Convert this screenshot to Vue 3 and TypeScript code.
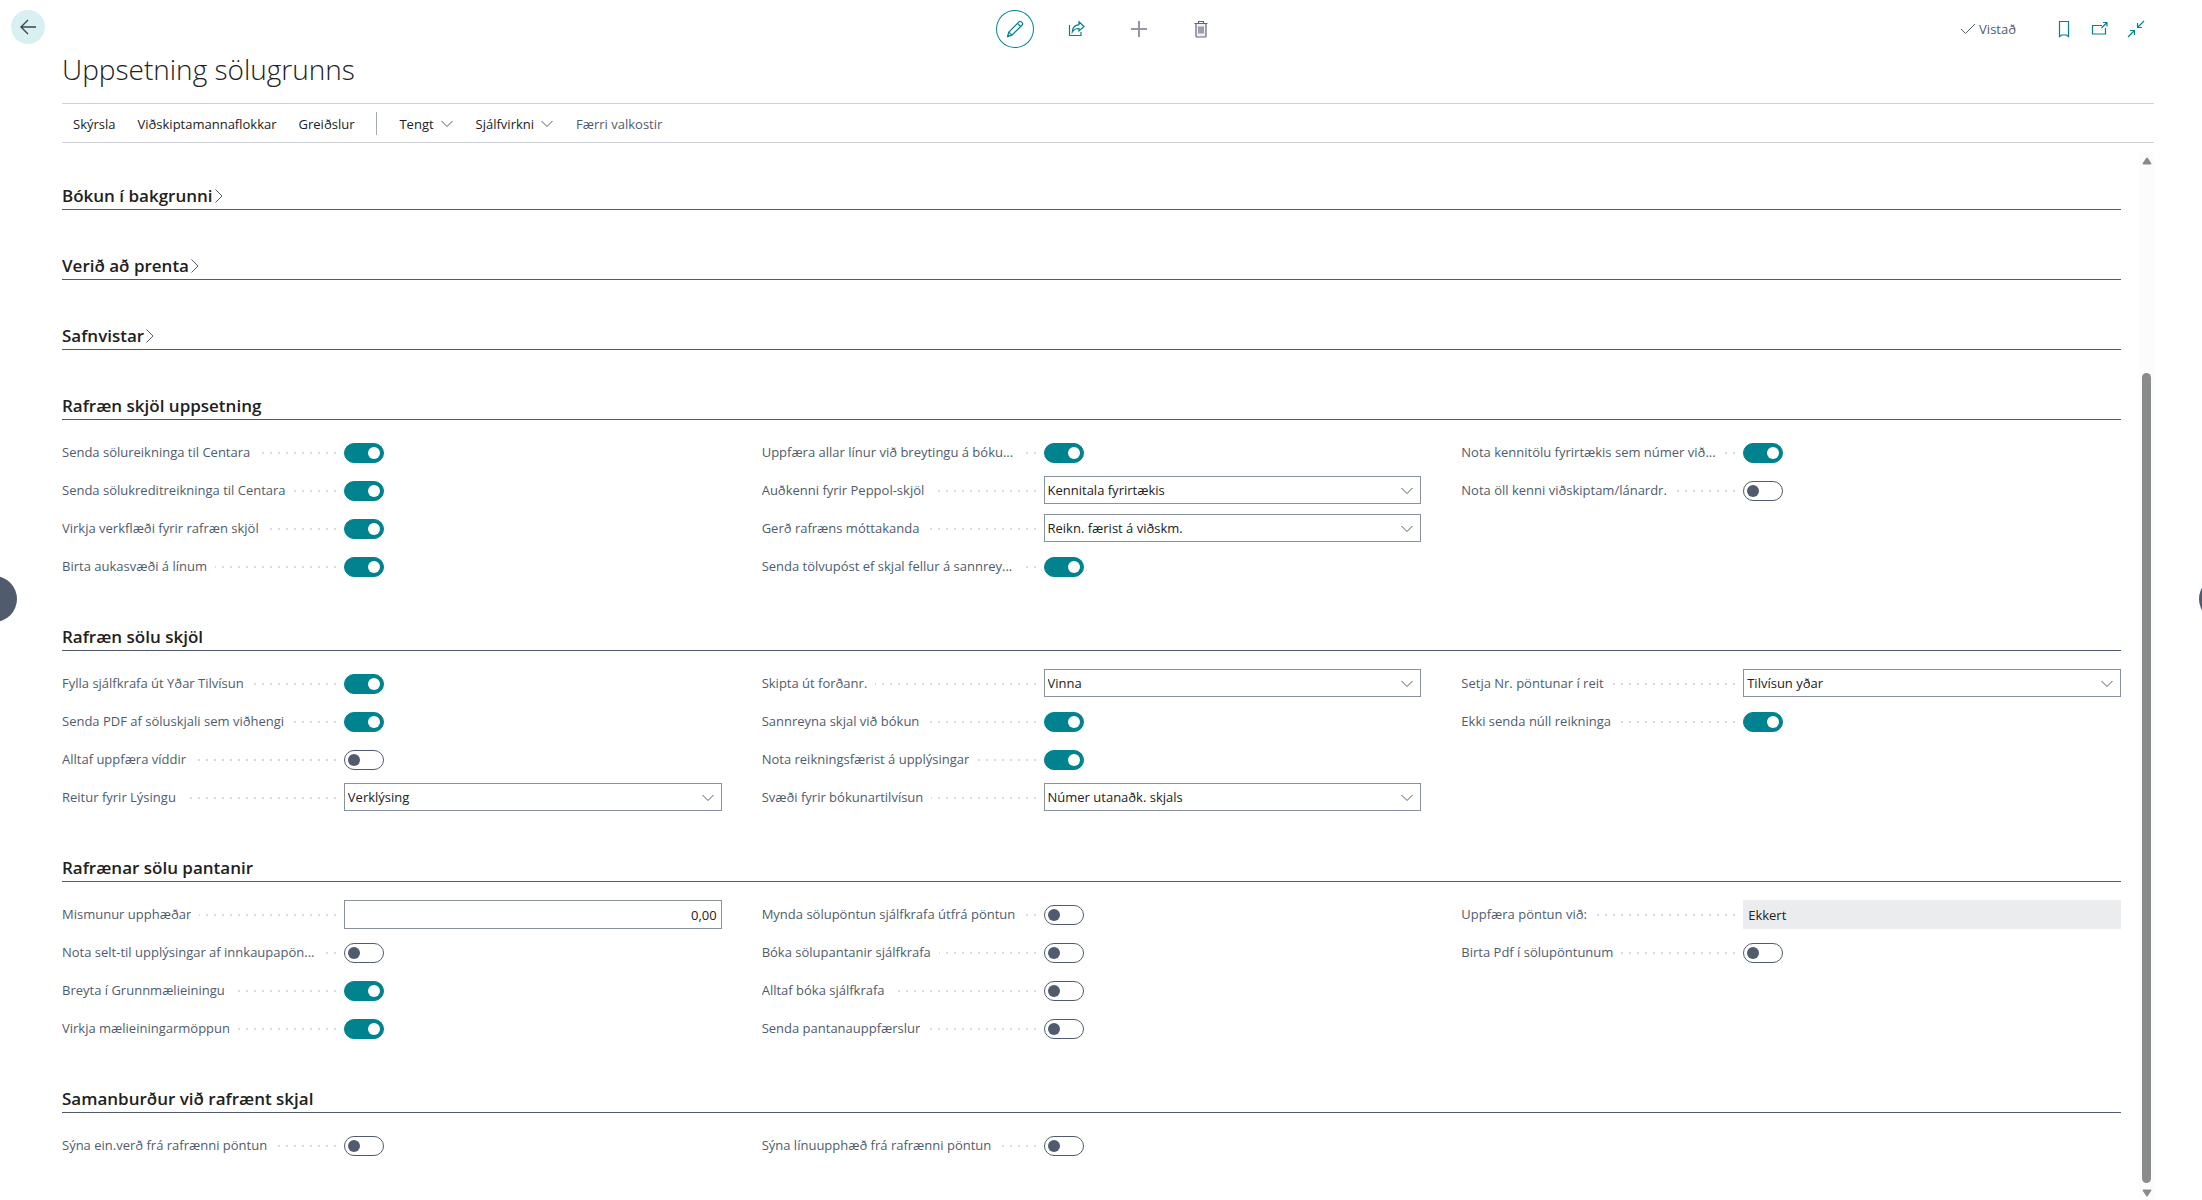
<script setup lang="ts">
import { reactive, ref } from 'vue'

type Kind = 'toggle' | 'select' | 'amount' | 'readonly'

interface Field {
  id: string
  label: string
  kind: Kind
  on: boolean
  value: string
}

interface Group {
  title: string
  columns: Field[][]
}

let nextId = 0

function makeField(label: string, kind: Kind, on: boolean, value: string): Field {
  nextId += 1
  return { id: `field-${nextId}`, label, kind, on, value }
}

const on = (label: string) => makeField(label, 'toggle', true, '')
const off = (label: string) => makeField(label, 'toggle', false, '')
const pick = (label: string, value: string) => makeField(label, 'select', false, value)

const collapsedGroups = ['Bókun í bakgrunni', 'Verið að prenta', 'Safnvistar']

const groups = reactive<Group[]>([
  {
    title: 'Rafræn skjöl uppsetning',
    columns: [
      [
        on('Senda sölureikninga til Centara'),
        on('Senda sölukreditreikninga til Centara'),
        on('Virkja verkflæði fyrir rafræn skjöl'),
        on('Birta aukasvæði á línum'),
      ],
      [
        on('Uppfæra allar línur við breytingu á bóku...'),
        pick('Auðkenni fyrir Peppol-skjöl', 'Kennitala fyrirtækis'),
        pick('Gerð rafræns móttakanda', 'Reikn. færist á viðskm.'),
        on('Senda tölvupóst ef skjal fellur á sannrey...'),
      ],
      [
        on('Nota kennitölu fyrirtækis sem númer við...'),
        off('Nota öll kenni viðskiptam/lánardr.'),
      ],
    ],
  },
  {
    title: 'Rafræn sölu skjöl',
    columns: [
      [
        on('Fylla sjálfkrafa út Yðar Tilvísun'),
        on('Senda PDF af söluskjali sem viðhengi'),
        off('Alltaf uppfæra víddir'),
        pick('Reitur fyrir Lýsingu', 'Verklýsing'),
      ],
      [
        pick('Skipta út forðanr.', 'Vinna'),
        on('Sannreyna skjal við bókun'),
        on('Nota reikningsfærist á upplýsingar'),
        pick('Svæði fyrir bókunartilvísun', 'Númer utanaðk. skjals'),
      ],
      [
        pick('Setja Nr. pöntunar í reit', 'Tilvísun yðar'),
        on('Ekki senda núll reikninga'),
      ],
    ],
  },
  {
    title: 'Rafrænar sölu pantanir',
    columns: [
      [
        makeField('Mismunur upphæðar', 'amount', false, '0,00'),
        off('Nota selt-til upplýsingar af innkaupapön...'),
        on('Breyta í Grunnmælieiningu'),
        on('Virkja mælieiningarmöppun'),
      ],
      [
        off('Mynda sölupöntun sjálfkrafa útfrá pöntun'),
        off('Bóka sölupantanir sjálfkrafa'),
        off('Alltaf bóka sjálfkrafa'),
        off('Senda pantanauppfærslur'),
      ],
      [
        makeField('Uppfæra pöntun við:', 'readonly', false, 'Ekkert'),
        off('Birta Pdf í sölupöntunum'),
      ],
    ],
  },
  {
    title: 'Samanburður við rafrænt skjal',
    columns: [
      [off('Sýna ein.verð frá rafrænni pöntun')],
      [off('Sýna línuupphæð frá rafrænni pöntun')],
      [],
    ],
  },
])

const editing = ref(true)
</script>

<template>
  <div class="page">
    <div class="rail">
      <button class="back" type="button" aria-label="Til baka">
        <svg width="18" height="18" viewBox="0 0 18 18"><path d="M17 9H2M9 2L2 9l7 7" /></svg>
      </button>
    </div>

    <div class="main">
      <header class="topbar">
        <div class="commands">
          <button class="icon-button" :class="{ active: editing }" type="button" aria-label="Breyta" @click="editing = !editing">
            <svg width="18" height="18" viewBox="0 0 18 18">
              <path d="M1.5 16.5l1.3-4.4L13 1.9a1.7 1.7 0 0 1 2.4 0l.7.7a1.7 1.7 0 0 1 0 2.4L5.9 15.200z" />
              <path d="M2.800 12.100l3.100 3.100M11.500 3.400l3.100 3.100M2 14.600l1.400 1.400" />
            </svg>
          </button>
          <button class="icon-button" type="button" aria-label="Deila">
            <svg width="18" height="18" viewBox="0 0 18 18">
              <path d="M1.500 5v10.500h11.500V12" />
              <path d="M11 1.800L16 6.500l-5 4.500V8.500C8 8.300 6 9.300 4.300 12 4.500 8 7 5 11 4.600z" />
            </svg>
          </button>
          <button class="icon-button muted" type="button" aria-label="Nýtt">
            <svg width="18" height="18" viewBox="0 0 18 18"><path class="thick" d="M9 1v16M1 9h16" /></svg>
          </button>
          <button class="icon-button slate" type="button" aria-label="Eyða">
            <svg width="18" height="18" viewBox="0 0 18 18">
              <path class="tint" d="M4 3.500h10v12.500a1 1 0 0 1-1 1H5a1 1 0 0 1-1-1z" />
              <path d="M2.500 3.500h13M6.500 3.500V1.500h5v2M7 6.500v7M9 6.500v7M11 6.500v7" />
            </svg>
          </button>
        </div>
        <div class="status">
          <span class="saved">
            <svg width="16" height="12" viewBox="0 0 16 12"><path d="M1 6l4.500 4.500L15 1" /></svg>
            <span>Vistað</span>
          </span>
          <button class="small-button" type="button" aria-label="Bókamerki">
            <svg width="18" height="18" viewBox="0 0 18 18"><path d="M4.500 1.500h9v15L11.500 15h-5l-2 1.500z" /></svg>
          </button>
          <button class="small-button" type="button" aria-label="Opna í nýjum glugga">
            <svg width="18" height="18" viewBox="0 0 18 18">
              <path d="M11 5.500H1.500v8.500h13V8" />
              <path d="M10.500 8L16 2.500M12 2.500h4v4" />
            </svg>
          </button>
          <button class="small-button" type="button" aria-label="Minnka">
            <svg width="18" height="18" viewBox="0 0 18 18">
              <path d="M17 1l-6.500 6.500M10.500 3v4.500H15M1 17l6.500-6.500M3 10.500h4.500V15" />
            </svg>
          </button>
        </div>
      </header>

      <h1>Uppsetning sölugrunns</h1>

      <nav class="toolbar">
        <button type="button">Skýrsla</button>
        <button type="button">Viðskiptamannaflokkar</button>
        <button type="button">Greiðslur</button>
        <span class="separator"></span>
        <button type="button">
          Tengt
          <svg width="12" height="8" viewBox="0 0 12 8"><path d="M.5 1L6 6.500 11.500 1" /></svg>
        </button>
        <button type="button">
          Sjálfvirkni
          <svg width="12" height="8" viewBox="0 0 12 8"><path d="M.5 1L6 6.500 11.500 1" /></svg>
        </button>
        <button class="fewer" type="button">Færri valkostir</button>
      </nav>

      <div class="scroll-area">
        <main class="content">
          <h2 v-for="title in collapsedGroups" :key="title">
            <button class="expander" type="button" aria-expanded="false">
              {{ title }}
              <svg width="8" height="14" viewBox="0 0 8 14"><path d="M.5 .5L7 7 .5 13.500" /></svg>
            </button>
          </h2>

          <section v-for="group in groups" :key="group.title">
            <h2>{{ group.title }}</h2>
            <div class="columns">
              <div v-for="(column, index) in group.columns" :key="index" class="column">
                <div v-for="field in column" :key="field.id" class="field">
                  <div class="caption">
                    <label :for="field.id">{{ field.label }}</label>
                    <span class="dots"></span>
                  </div>
                  <input v-if="field.kind === 'toggle'" :id="field.id" v-model="field.on" class="toggle" type="checkbox" role="switch" />
                  <div v-else-if="field.kind === 'select'" class="select">
                    <select :id="field.id" v-model="field.value">
                      <option>{{ field.value }}</option>
                    </select>
                    <svg width="12" height="8" viewBox="0 0 12 8"><path d="M.5 1L6 6.500 11.500 1" /></svg>
                  </div>
                  <input v-else-if="field.kind === 'amount'" :id="field.id" v-model="field.value" class="text amount" type="text" />
                  <input v-else :id="field.id" :value="field.value" class="text readonly" type="text" readonly />
                </div>
              </div>
            </div>
          </section>
        </main>

        <div class="scrollbar">
          <svg width="10" height="8" viewBox="0 0 10 8"><path d="M4 1.200a1.200 1.200 0 0 1 2 0L9.300 6.300a.8.8 0 0 1-.7 1.200H1.400a.8.8 0 0 1-.7-1.200z" /></svg>
          <div class="track"><div class="thumb"></div></div>
          <svg width="10" height="8" viewBox="0 0 10 8"><path d="M4 6.800a1.200 1.200 0 0 0 2 0L9.300 1.700a.8.8 0 0 0-.7-1.200H1.400a.8.8 0 0 0-.7 1.200z" /></svg>
        </div>
      </div>
    </div>

    <button class="pager previous" type="button" aria-label="Fyrri"></button>
    <button class="pager next" type="button" aria-label="Næsta"></button>
  </div>
</template>

<style>
body {
  background: #fff;
}
</style>

<style scoped>
.page {
  position: relative;
  display: grid;
  grid-template-columns: 62px 1fr;
  min-height: 100vh;
  padding-right: 48px;
  box-sizing: border-box;
  overflow: hidden;
  color: #212121;
  font-family: 'Open Sans', 'Noto Sans', sans-serif;
  font-size: 13px;
}

button {
  padding: 0;
  border: 0;
  background: none;
  color: inherit;
  font: inherit;
}

svg {
  display: block;
  flex: none;
  fill: none;
  stroke: currentColor;
  stroke-width: 1;
}

.rail {
  padding: 10px 0 0 11px;
}

.back {
  display: flex;
  align-items: center;
  justify-content: center;
  width: 34px;
  height: 34px;
  border-radius: 50%;
  background: #d9f0f2;
  color: #3c4450;
}

.back svg {
  stroke-width: 1.4;
}

.main {
  display: flex;
  flex-direction: column;
  min-width: 0;
}

.topbar {
  display: grid;
  grid-template-columns: 1fr auto 1fr;
  align-items: center;
  padding-top: 10px;
}

.commands {
  grid-column: 2;
  display: flex;
  gap: 24px;
}

.icon-button,
.small-button {
  display: flex;
  align-items: center;
  justify-content: center;
  width: 38px;
  height: 38px;
  border-radius: 50%;
  color: #00838f;
}

.icon-button svg,
.small-button svg {
  stroke-width: 1.2;
}

.icon-button.active {
  box-shadow: inset 0 0 0 1px #00838f;
}

.icon-button.muted {
  color: #9297a1;
}

.icon-button.slate {
  color: #5f6878;
}

.icon-button .thick {
  stroke-width: 2;
}

.icon-button .tint {
  fill: #eff0f2;
}

.small-button {
  width: 36px;
}

.status {
  display: flex;
  align-items: center;
  justify-content: flex-end;
}

.saved {
  display: flex;
  align-items: center;
  gap: 3px;
  margin-right: 30px;
  color: #505c6d;
}

h1 {
  margin: 0;
  padding-bottom: 13px;
  color: #212121;
  font-size: 28px;
  font-weight: 300;
  line-height: 42px;
}

.toolbar {
  display: flex;
  align-items: center;
  gap: 22px;
  height: 38px;
  padding-left: 11px;
  border-top: 1px solid #d0d1d6;
  border-bottom: 1px solid #d0d1d6;
}

.toolbar button {
  display: flex;
  align-items: center;
  gap: 7px;
  padding-top: 2px;
}

.toolbar svg {
  margin-right: 1px;
  color: #505c6d;
}

.toolbar .fewer {
  color: #505c6d;
}

.separator {
  width: 1px;
  height: 23px;
  background: #a5abb5;
}

.scroll-area {
  display: flex;
  flex: 1;
  padding-top: 10px;
}

.content {
  flex: 1;
  min-width: 0;
  padding-right: 18px;
  margin-top: -13px;
}

h2 {
  display: flex;
  align-items: flex-end;
  height: 69px;
  margin: 0;
  border-bottom: 1px solid #505c6d;
  font-size: 17px;
  font-weight: 600;
  line-height: 26px;
}

.expander {
  display: flex;
  align-items: center;
  gap: 2px;
}

.expander svg {
  color: #505c6d;
}

.columns {
  display: grid;
  grid-template-columns: repeat(3, minmax(0, 1fr));
  column-gap: 40px;
  padding-top: 18px;
}

.column {
  display: flex;
  flex-direction: column;
  gap: 9px;
}

.field {
  display: grid;
  grid-template-columns: 47fr 63fr;
  height: 29px;
}

.caption {
  display: flex;
  gap: 8px;
  min-width: 0;
  padding-right: 8px;
  color: #505c6d;
  line-height: 29px;
}

.caption label {
  overflow: hidden;
  text-overflow: ellipsis;
  white-space: nowrap;
}

.dots {
  flex: 1;
  min-width: 2px;
  height: 2px;
  margin-top: 14px;
  background: repeating-linear-gradient(to left, #d9dbde 0 2px, transparent 2px 8px);
}

.toggle {
  appearance: none;
  display: flex;
  align-items: center;
  width: 40px;
  height: 20px;
  margin: 5px 0 0;
  padding: 0 3px;
  box-sizing: border-box;
  border: 1px solid #505c6d;
  border-radius: 10px;
  background: #fff;
}

.toggle::before {
  content: '';
  width: 12px;
  height: 12px;
  border-radius: 50%;
  background: #505c6d;
}

.toggle:checked {
  justify-content: flex-end;
  border-color: #00838f;
  background: #00838f;
}

.toggle:checked::before {
  background: #fff;
}

.select {
  position: relative;
  height: 28px;
}

.select select,
.text {
  width: 100%;
  height: 100%;
  margin: 0;
  box-sizing: border-box;
  border: 1px solid #8a919e;
  border-radius: 0;
  background: #fff;
  color: #212121;
  font: inherit;
}

.select select {
  appearance: none;
  padding: 0 24px 0 3px;
}

.select svg {
  position: absolute;
  top: 11px;
  right: 8px;
  color: #505c6d;
  pointer-events: none;
}

.text {
  padding: 0 4px;
}

.amount {
  text-align: right;
}

.text.readonly {
  border-color: #ebecee;
  background: #ebecee;
}

.scrollbar {
  display: flex;
  flex-direction: column;
  align-items: center;
  gap: 6px;
  width: 15px;
  padding: 4px 0 3px;
  box-sizing: border-box;
  background: #fcfcfc;
}

.scrollbar svg {
  fill: #8a8a8a;
  stroke: none;
}

.track {
  display: flex;
  flex: 1;
  flex-direction: column;
  justify-content: flex-end;
}

.thumb {
  width: 9px;
  height: 80%;
  border-radius: 5px;
  background: #8a8c8c;
}

.pager {
  position: absolute;
  top: 50%;
  width: 46px;
  height: 46px;
  margin-top: -24px;
  border-radius: 50%;
  background: #505c6d;
}

.previous {
  left: -29px;
}

.next {
  right: -43px;
}
</style>
